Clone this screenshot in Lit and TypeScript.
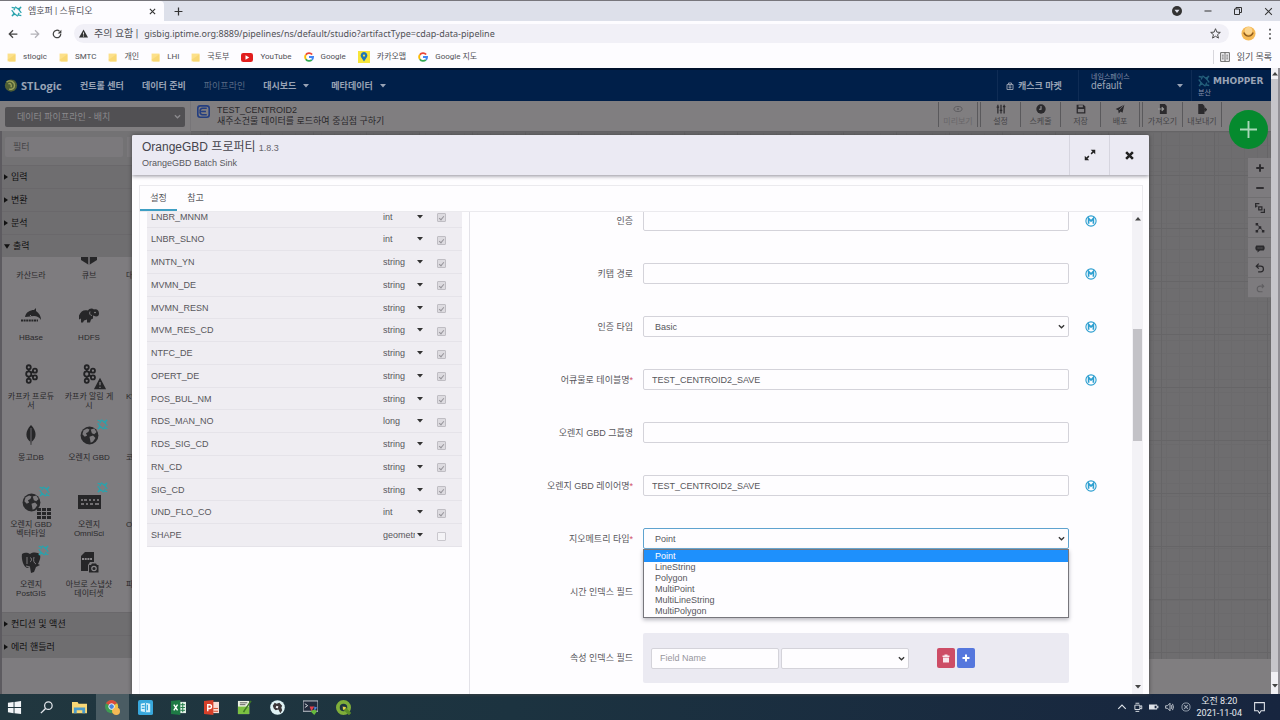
import { LitElement, html, svg, css, nothing } from "lit";
import { customElement } from "lit/decorators.js";
import { classMap } from "lit/directives/class-map.js";

const sans = css`"Liberation Sans", "Noto Sans CJK KR", sans-serif`;
const uiFont = css`Roboto, "Noto Sans CJK KR", sans-serif`;

/* ---------- icon drawings ---------- */
const icon = (w: number, h: number, body: unknown, box = "0 0 16 16") =>
  html`<svg width=${w} height=${h} viewBox=${box} fill="none" aria-hidden="true">${body}</svg>`;

const swirl = (size: number, color = "#29a3ad") =>
  icon(size, size, svg`<g stroke=${color} stroke-width="1.7">
    <path d="M1 2l5 1M6 1l4 3 5-2M14 1l-2 5 3 4M15 14l-5-1M10 15l-4-3-5 2M2 15l2-5-3-4M4 6l2-3M10 4l2 2M12 10l-2 3M6 12l-2-2"/></g>`);

const chevron = (color = "#333") =>
  icon(7, 7, svg`<path d="M2 5l6 6 6-6" stroke=${color} stroke-width="3"/>`);

const caret = (color = "#333") =>
  icon(6, 4, svg`<path d="M0 0h12l-6 7z" fill=${color}/>`, "0 0 12 8");

const arrow = (up: boolean) => icon(6, 4, svg`<path d=${up ? "M0 7h12L6 0z" : "M0 0h12L6 7z"} fill="#444"/>`, "0 0 12 8");

const googleG = icon(10, 10, svg`<g stroke-width="3">
  <path d="M13 4A6.3 6.3 0 0 0 3 4.500" stroke="#ea4335"/>
  <path d="M3 4.500a6.300 6.300 0 0 0 0 7" stroke="#fbbc05"/>
  <path d="M3 11.500a6.300 6.300 0 0 0 9.500 1" stroke="#34a853"/>
  <path d="M12.500 12.500a6 6 0 0 0 2-4.500H8" stroke="#4285f4"/></g>`);

const folder = icon(9, 11, svg`<path d="M1 1h14v14H1z" fill="#fce08a"/><path d="M1 12l3 3h11V2z" fill="#f8d774"/>`);

const globe = (s: number) => icon(s, s, svg`<circle cx="8" cy="8" r="7.500" fill="#29292b"/>
  <path d="M3 3.500l3-1.500 2 1-1 2-2 1 1 2-2 1-2-2zM9 3l3-1 2 3-2 2-2-1zM8 9l3-1 2 2-2 3-2 1z" fill="#7c7a7d"/>`);

const kafka = svg`<g stroke="#222224" stroke-width="1.600"><circle cx="6" cy="3" r="1.800"/><circle cx="6" cy="9" r="2.300"/>
  <circle cx="6" cy="15" r="1.800"/><circle cx="11.500" cy="6" r="1.800"/><circle cx="11.500" cy="12" r="1.800"/>
  <path d="M6 4.800v1.900M6 11.300v1.900M8 7.800l2-.9M8 10.200l2 .9"/></g>`;

const dark = "#262628";
const drawings: Record<string, unknown> = {
  cass: icon(0, 0, nothing),
  cube: icon(20, 24, svg`<path d="M2 2h16v17l-8 5-8-5z" fill=${dark}/><path d="M10 8v16" stroke="#7c7a7d" stroke-width="1.500"/>`, "0 0 20 24"),
  hbase: icon(22, 16, svg`<path d="M5 10c1-5 5-7 9-7l2-2v3c3 2 5 5 5 9-2-3-4-4-7-4-3 0-5 1-9 1z" fill=${dark}/>
    <path d="M10 8c2 3 5 3 7 5" stroke="#7c7a7d"/><path d="M1 13.500h17" stroke=${dark} stroke-width="2" stroke-dasharray="2 .6"/>`, "0 0 22 16"),
  hdfs: icon(22, 17, svg`<path d="M1 8c2-5 5-6 9-5 1-2 4-3 6-1 3-1 5 1 5 4 0 2-1 3-3 3l-3-1v3l-2 1-1 3h-3v-3l-3 1-1 2H3v-4l-2 1z" fill=${dark}/>
    <path d="M12 4c-1 2 0 4 2 4" stroke="#7c7a7d"/><circle cx="17" cy="5" r=".8" fill="#999"/>`, "0 0 22 16"),
  kafka: icon(18, 22, kafka, "0 0 16 18"),
  kafkaWarn: html`<span class="stack">${icon(18, 22, kafka, "0 0 16 18")}<span class="badge warn">${icon(14, 13,
    svg`<path d="M8 1l7.500 14H.5z" fill=${dark}/><path d="M8 6v4M8 12v1.600" stroke="#7c7a7d" stroke-width="1.600"/>`)}</span></span>`,
  leaf: icon(12, 20, svg`<path d="M6 0c6 6 6 13 .5 17l-.2 3h-.6l-.2-3C0 13 0 6 6 0z" fill=${dark}/><path d="M6 3v14" stroke="#7c7a7d" stroke-width=".8"/>`, "0 0 12 20"),
  gbd: html`<span class="stack">${globe(19)}<span class="badge top">${swirl(11)}</span></span>`,
  tile: html`<span class="stack">${globe(19)}<span class="badge top">${swirl(11)}</span><span class="badge low">${icon(14, 11,
    svg`<path d="M0 0h4v3H0zM5 0h4v3H5zM10 0h4v3h-4zM0 4h4v3H0zM5 4h4v3H5zM10 4h4v3h-4zM0 8h4v3H0zM5 8h4v3H5zM10 8h4v3h-4z" fill=${dark}/>`, "0 0 14 11")}</span></span>`,
  omni: html`<span class="stack">${icon(23, 14, svg`<path d="M0 0h23v14H0z" fill=${dark}/>
    <path d="M3 5h2M6 5h3M11 5h2M15 5h2M19 5h2M3 9h3M8 9h2M12 9h3M17 9h4" stroke="#8a888b" stroke-width="1.500"/>`, "0 0 23 14")}<span class="badge omni">${swirl(11)}</span></span>`,
  post: html`<span class="stack">${icon(20, 21, svg`<path d="M1 2c3-2 6-1 8 0 3-2 8-2 10 1 1 3-1 7-2 9l2 1-4 2-2 5-3 1-1-6-3 1C3 15 0 8 1 2z" fill=${dark}/>
    <path d="M6 5v7M9 6c2-1 2 3 0 4M13 5c-1 4 0 6 2 7M5 14l4 1" stroke="#7c7a7d"/>`, "0 0 20 21")}<span class="badge top">${swirl(11)}</span></span>`,
  avro: icon(20, 23, svg`<path d="M6 1h9v10h-4l-2 3v6H2V5z" fill=${dark}/><path d="M3 8h10" stroke="#8a888b" stroke-width="2" stroke-dasharray="2 .7"/>
    <path d="M10 14h2l1-1.500h4L18 14h1.500v7.500H10z" fill=${dark}/><circle cx="15" cy="17.500" r="2.200" stroke="#8a888b" stroke-width="1.200"/>`, "0 0 20 23"),
};

const expand = icon(12, 12, svg`<path d="M9.500 6.500L13 3M6.500 9.500L3 13" stroke="#222" stroke-width="2"/>
  <path d="M9 1h6v6zM1 9v6h6z" fill="#222"/>`);
const cross = icon(9, 9, svg`<path d="M2 2l12 12M14 2L2 14" stroke="#222" stroke-width="4.500"/>`);
const macroIcon = icon(12, 12, svg`<circle cx="8" cy="8" r="6.800" stroke="#2d9fd0" stroke-width="1.500"/>
  <path d="M4.800 11.500v-7L8 8l3.200-3.500v7" stroke="#2d9fd0" stroke-width="2.200"/>`);

/* ---------- browser chrome ---------- */
@customElement("browser-chrome")
class BrowserChrome extends LitElement {
  static styles = css`
    :host { display: block; font: 10px/14px ${uiFont}; color: #505056; flex: none; }
    button, a { font: inherit; color: inherit; border: 0; padding: 0; background: none; text-decoration: none; }
    button { display: grid; place-items: center; }
    svg { display: block; flex: none; }
    .strip { display: flex; align-items: center; height: 21px; background: #dde0ea; border-top: 1px solid #77767c; box-sizing: border-box; }
    .tab { display: flex; align-items: center; align-self: stretch; width: 164px; box-sizing: border-box; padding: 0 8px 0 11px; gap: 6px; background: #fdfcff; border-radius: 0 4px 0 0; }
    .name { flex: 1; font-size: 9px; }
    .plus { margin: 0 auto 0 10px; }
    .win { display: flex; gap: 22px; padding-right: 7px; align-items: center; }
    .bar { display: flex; align-items: center; height: 25px; padding: 0 8px; gap: 12px; background: #fdfcff; }
    .omni { flex: 1; display: flex; align-items: center; gap: 6px; height: 19px; border-radius: 10px; background: #f1f0f7; padding: 0 8px 0 5px; }
    .url { flex: 1; border: 0; background: none; font: 9px/14px "Noto Sans", sans-serif; color: #505056; padding: 0; outline: 0; min-width: 0; }
    .marks { display: flex; align-items: center; height: 22px; padding: 0 8px 0 7px; background: #fdfcff; font-size: 8px; }
    .mark { display: flex; align-items: center; gap: 7px; margin-right: 12px; white-space: nowrap; }
    .list { display: flex; align-items: center; gap: 7px; margin-left: auto; border-left: 1px solid #d8d7dd; padding-left: 6px; font-size: 9px; }
  `;
  render() {
    const marks: [unknown, string][] = [
      [folder, "stlogic"], [folder, "SMTC"], [folder, "개인"], [folder, "LHI"], [folder, "국토부"],
      [icon(12, 9, svg`<rect width="16" height="12" rx="3" fill="#e11d1d"/><path d="M6 3l5 3-5 3z" fill="#fff"/>`, "0 0 16 12"), "YouTube"],
      [googleG, "Google"],
      [icon(12, 12, svg`<path d="M0 0h16v16H0z" fill="#f7e53a"/><path d="M8 14L4 8a4.500 4.500 0 1 1 8 0z" fill="#1d76b8"/><circle cx="8" cy="6" r="1.500" fill="#f7e53a"/>`), "카카오맵"],
      [googleG, "Google 지도"],
    ];
    return html`
      <div class="strip">
        <div class="tab">${swirl(11)}<span class="name">엠호퍼 | 스튜디오</span>
          <button aria-label="탭 닫기">${icon(7, 7, svg`<path d="M2 2l12 12M14 2L2 14" stroke="#333" stroke-width="2.500"/>`)}</button></div>
        <button class="plus" aria-label="새 탭">${icon(9, 9, svg`<path d="M8 1v14M1 8h14" stroke="#333" stroke-width="2.200"/>`)}</button>
        <div class="win">
          <button aria-label="검색">${icon(10, 10, svg`<circle cx="8" cy="8" r="8" fill="#333"/><path d="M4 6h8l-4 5z" fill="#dde0ea"/>`)}</button>
          <button aria-label="최소화">${icon(8, 8, svg`<path d="M1 8h14" stroke="#333" stroke-width="2"/>`)}</button>
          <button aria-label="이전 크기로">${icon(8, 8, svg`<path d="M1 4h10v11H1zM4 4V1h11v10h-4" stroke="#333" stroke-width="2"/>`)}</button>
          <button aria-label="닫기">${icon(9, 9, svg`<path d="M2 2l12 12M14 2L2 14" stroke="#333" stroke-width="1.800"/>`)}</button>
        </div>
      </div>
      <div class="bar">
        <button aria-label="뒤로">${icon(10, 10, svg`<path d="M15 8H2M8 2L2 8l6 6" stroke="#444" stroke-width="2"/>`)}</button>
        <button aria-label="앞으로">${icon(10, 10, svg`<path d="M1 8h13M8 2l6 6-6 6" stroke="#b4b3b9" stroke-width="2"/>`)}</button>
        <button aria-label="새로고침">${icon(10, 10, svg`<path d="M14 8a6 6 0 1 1-2-4.500" stroke="#444" stroke-width="2"/><path d="M15 1v6H9z" fill="#444"/>`)}</button>
        <div class="omni">
          ${icon(9, 9, svg`<path d="M8 1l8 14H0z" fill="#333"/><path d="M8 6v4M8 11.500v2" stroke="#fff" stroke-width="1.500"/>`)}
          <span>주의 요함 |</span>
          <input class="url" aria-label="주소" value="gisbig.iptime.org:8889/pipelines/ns/default/studio?artifactType=cdap-data-pipeline" />
          <button aria-label="북마크">${icon(11, 11, svg`<path d="M8 1l2 5 5 .4-4 3.300 1.300 5L8 12l-4.300 2.700L5 9.700 1 6.400 6 6z" stroke="#444" stroke-width="1.400"/>`)}</button>
        </div>
        <button aria-label="프로필">${icon(15, 15, svg`<circle cx="8" cy="8" r="7.500" fill="#f5b955"/><circle cx="8" cy="5" r="4" fill="#fbd48d"/><path d="M3 7c2 5 8 5 10 0" stroke="#8a5a20" stroke-width="1.500"/>`)}</button>
        <button aria-label="메뉴">${icon(4, 12, svg`<path d="M2 1v2M2 6v2M2 11v2" stroke="#444" stroke-width="2"/>`, "0 0 4 14")}</button>
      </div>
      <nav class="marks">
        ${marks.map(([i, t]) => html`<a class="mark" href="#">${i}<span>${t}</span></a>`)}
        <button class="list">${icon(10, 10, svg`<path d="M1 1h14v14H1zM8 1v14M3 5h3M3 8h3M3 11h3M10 5h3M10 8h3M10 11h3" stroke="#555" stroke-width="1.400"/>`)}<span>읽기 목록</span></button>
      </nav>`;
  }
}

/* ---------- application header and toolbar ---------- */
@customElement("app-header")
class AppHeader extends LitElement {
  static styles = css`
    :host { display: block; flex: none; font: 9px/12px ${sans}; color: #99a3b5; }
    button, a { font: inherit; color: inherit; border: 0; padding: 0; background: none; text-decoration: none; }
    svg { display: block; flex: none; }
    .top { display: flex; align-items: stretch; height: 33px; box-sizing: border-box; background: #001f49; border-top: 2px solid #00112d; padding-left: 4px; }
    .brand { display: flex; align-items: center; gap: 3px; width: 76px; font: bold 11px/16px "Open Sans", sans-serif; }
    .nav { display: flex; align-items: center; gap: 18px; font-weight: bold; }
    .drop { display: flex; align-items: center; gap: 7px; margin-right: 4px; }
    .here { color: #596b86; font-weight: normal; }
    .right { display: flex; margin-left: auto; }
    .market { display: flex; align-items: center; gap: 4px; width: 81px; box-sizing: border-box; padding-left: 8px; border-left: 1px solid #0f2c55; font-weight: bold; }
    .space { display: flex; align-items: center; justify-content: space-between; width: 113px; box-sizing: border-box; padding: 0 8px 0 12px; border-left: 1px solid #0f2c55; text-align: left; }
    .space > span { padding-bottom: 8px; }
    .small { display: block; font-size: 7px; line-height: 9px; color: #8691aa; }
    .ns { display: block; font: 10px/10px Roboto, sans-serif; }
    .hopper { width: 80px; box-sizing: border-box; border-left: 1px solid #0f2c55; padding: 4px 0 0 6px; }
    .logo { display: flex; align-items: center; gap: 3px; font: bold 9px/14px "DejaVu Sans", sans-serif; }
    .tools { display: flex; align-items: stretch; height: 30px; background: #807e80; color: #39383b; }
    .kind { width: 191px; box-sizing: border-box; border-right: 1px solid #777578; padding: 5px 5px 4px; display: flex; align-items: center; position: relative; }
    .kind select { appearance: none; flex: 1; height: 20px; border: 0; border-radius: 2px; background: #515053; color: #8b8a8d; font: inherit; padding: 0 12px; }
    .kind svg { position: absolute; right: 9px; }
    .title { display: flex; gap: 7px; padding: 4px 0 0 6px; line-height: 11px; flex: 1; color: #29282b; }
    .title p { margin: 0; }
    .acts { display: flex; padding: 1px 49px 4px 0; }
    .act { width: 40px; display: flex; flex-direction: column; align-items: center; gap: 3px; padding: 2px 0 0; border-left: 1px solid #5a595c; font-size: 8px; line-height: 10px; color: #454447; white-space: nowrap; }
    .act:last-child { border-right: 1px solid #5a595c; }
    .act.gap { border-right: 1px solid #5a595c; margin-right: 2px; }
    .act.off { color: #686669; }
  `;
  render() {
    const d = "#2b2a2d";
    const acts: [string, unknown, string][] = [
      ["미리보기", svg`<ellipse cx="8" cy="8" rx="6.500" ry="4" stroke="#5d5c5f" stroke-width="1.500"/><circle cx="8" cy="8" r="1.500" fill="#5d5c5f"/>`, "off gap"],
      ["설정", svg`<path d="M3 1v14M8 1v14M13 1v14M1 5h4M6 10h4M11 4h4" stroke=${d} stroke-width="2"/>`, ""],
      ["스케줄", svg`<circle cx="8" cy="8" r="7.500" fill=${d}/><path d="M8 3v5.500H5" stroke="#999" stroke-width="1.700"/>`, ""],
      ["저장", svg`<path d="M1 1h11l3 3v11H1z" fill=${d}/><path d="M4 2h7v3H4zM3 8h10v5H3z" fill="#807e80"/>`, ""],
      ["배포", svg`<path d="M15 1L1 8l4 2 1 5 3-3 3 2z" fill=${d}/><path d="M14 2l-8 8" stroke="#807e80"/>`, "gap"],
      ["가져오기", svg`<path d="M3 0h8l3 3v13H3z" fill=${d}/><path d="M0 8h8M6 5l3 3-3 3" stroke="#999" stroke-width="1.700"/>`, ""],
      ["내보내기", svg`<path d="M2 0h7l3 3v13H2z" fill=${d}/><path d="M6 9h8M12 6l3 3-3 3" stroke=${d} stroke-width="2"/>`, ""],
    ];
    return html`
      <header class="top">
        <a class="brand" href="#">${icon(14, 15, svg`<circle cx="8" cy="8" r="7" fill="#4f5f35"/><path d="M3 4c4-3 9 0 9 4s-4 5-6 4M5 6c3-1 4 2 3 4" stroke="#9aa05a" stroke-width="1.600"/>`)}<span>STLogic</span></a>
        <nav class="nav">
          <a href="#">컨트롤 센터</a><a href="#">데이터 준비</a><a class="here" href="#">파이프라인</a>
          <button class="drop">대시보드 ${caret("#99a3b5")}</button><button class="drop">메타데이터 ${caret("#99a3b5")}</button>
        </nav>
        <div class="right">
          <button class="market">${icon(8, 10, svg`<path d="M5 5V2h6v3M2 5h12v10H2z" stroke="#8f99aa" stroke-width="2"/><path d="M8 6v8M5 8h6M5 11h6" stroke="#8f99aa" stroke-width="1.500"/>`)}캐스크 마켓</button>
          <button class="space"><span><span class="small">네임스페이스</span><span class="ns">default</span></span>${caret("#99a3b5")}</button>
          <div class="hopper"><div class="logo">${swirl(12, "#24607c")}<span>MHOPPER</span></div><span class="small">분산</span></div>
        </div>
      </header>
      <div class="tools">
        <div class="kind"><select aria-label="파이프라인 종류"><option>데이터 파이프라인 - 배치</option></select>${chevron("#8b8a8d")}</div>
        <div class="title">${icon(13, 13, svg`<rect x="1" y="1" width="14" height="14" rx="3" stroke="#233e80" stroke-width="2"/><path d="M12 4H7a3 3 0 0 0-3 4 3 3 0 0 0 3 4h5M5 8h6" stroke="#233e80" stroke-width="2"/>`)}
          <div><p>TEST_CENTROID2</p><p>새주소건물 데이터를 로드하여 중심점 구하기</p></div></div>
        <div class="acts">${acts.map(([t, i, c]) => html`<button class="act ${c}">${icon(10, 10, i)}${t}</button>`)}</div>
      </div>`;
  }
}

/* ---------- plugin palette ---------- */
@customElement("plugin-palette")
class PluginPalette extends LitElement {
  static styles = css`
    :host { display: flex; flex-direction: column; width: 191px; flex: none; box-sizing: border-box; background: #7e7c7f; font: 9px/12px ${sans}; color: #2a292b; overflow: hidden; border-left: 2px solid #5d5b60; }
    svg { display: block; }
    .find { display: flex; gap: 4px; padding: 6px 3px 8px; background: #737274; }
    .find input { width: 118px; height: 20px; box-sizing: border-box; border: 0; border-radius: 2px; background: #7b797c; padding: 0 8px; font: inherit; color: #333; outline: 0; }
    .find input::placeholder { color: #444346; opacity: 1; }
    .find button { flex: 1; border: 0; background: #7b797c; }
    .group { display: flex; align-items: center; gap: 3px; width: 100%; height: 23px; flex: none; padding: 0 2px; border: 0; border-top: 1px solid #6a686b; background: #6f6e70; font: 9px/12px ${sans}; color: #111; text-align: left; }
    .shelf { height: 355px; overflow: hidden; }
    .grid { display: grid; grid-template-columns: repeat(3, 58px); grid-template-rows: 62px 59px 61px 67px 60px 67px; margin-top: -22px; }
    .cell { display: flex; flex-direction: column; align-items: center; border: 0; padding: 0 4px; background: none; font: 8px/9px ${sans}; color: #2a292b; text-align: center; }
    .pic { display: grid; place-items: center; height: 36px; flex: none; }
    .edge { align-items: flex-start; padding-left: 8px; }
    .stack { position: relative; display: block; }
    .badge { position: absolute; }
    .top { left: 17px; top: -7px; }
    .low { left: 15px; top: 15px; }
    .warn { left: 13px; top: 14px; }
    .omni { left: 19px; top: -13px; }
  `;
  render() {
    const cells: [string, string][] = [
      ["cass", "카산드라"], ["cube", "큐브"], ["", "대"],
      ["hbase", "HBase"], ["hdfs", "HDFS"], ["", ""],
      ["kafka", "카프카 프로듀서"], ["kafkaWarn", "카프카 알림 게시"], ["", "KV"],
      ["leaf", "몽고DB"], ["gbd", "오렌지 GBD"], ["", "코"],
      ["tile", "오렌지 GBD 벡터타일"], ["omni", "오렌지 OmniSci"], ["", "Or"],
      ["post", "오렌지 PostGIS"], ["avro", "아브로 스냅샷 데이터셋"], ["", "파"],
    ];
    const group = (t: string, open = false) => html`<button class="group">${open
      ? icon(6, 5, svg`<path d="M0 0h12l-6 9z" fill="#111"/>`, "0 0 12 9")
      : icon(4, 6, svg`<path d="M0 0l7 5-7 5z" fill="#111"/>`, "0 0 7 10")}${t}</button>`;
    return html`
      <div class="find"><input aria-label="필터" placeholder="필터" /><button aria-label="보기 방식"></button></div>
      ${["입력", "변환", "분석"].map((t) => group(t))}${group("출력", true)}
      <div class="shelf"><div class="grid">${cells.map(([k, t]) => html`
        <button class=${classMap({ cell: true, edge: !k })}><span class="pic">${k ? drawings[k] : nothing}</span>${t}</button>`)}</div></div>
      ${["컨디션 및 액션", "에러 핸들러"].map((t) => group(t))}`;
  }
}

/* ---------- canvas with zoom controls ---------- */
@customElement("pipeline-canvas")
class PipelineCanvas extends LitElement {
  static styles = css`
    :host { display: flex; flex-direction: column; flex: 1; background: #807e80; }
    svg { display: block; }
    .area { flex: 1; display: flex; flex-direction: column; align-items: flex-end; margin-bottom: 35px; box-sizing: border-box; padding-top: 26px; border-top: 1px solid #656466;
      background: repeating-linear-gradient(90deg, #666567 0 1px, transparent 1px 53px) 16px 0, repeating-linear-gradient(#666567 0 1px, transparent 1px 53px) 0 43px, repeating-linear-gradient(90deg, #6b6a6c 0 1px, transparent 1px 13px), repeating-linear-gradient(#6b6a6c 0 1px, transparent 1px 13px), #6e6d6f; }
    .ctl { display: flex; flex-direction: column; background: #7d7b7e; }
    .ctl button { display: grid; place-items: center; width: 23px; height: 20px; padding: 0; border: 0; border-bottom: 1px solid #706f71; background: none; }
    .add { position: absolute; right: 3px; top: 42px; width: 39px; height: 39px; border: 0; border-radius: 50%; background: #058a2e; display: grid; place-items: center; padding: 0; }
  `;
  render() {
    const c = "#2b2a2d";
    const ctl: [string, unknown][] = [
      ["확대", svg`<path d="M8 2v12M2 8h12" stroke=${c} stroke-width="3"/>`],
      ["축소", svg`<path d="M2 8h12" stroke=${c} stroke-width="3"/>`],
      ["맞춤", svg`<path d="M1 7V1h6M1 5h3M15 9v6H9" stroke=${c} stroke-width="2"/><path d="M6 6h5v5H6z" stroke=${c} stroke-width="2"/>`],
      ["정렬", svg`<path d="M1 0h4v4H1zM6 5h4v4H6zM1 11h4v4H1zM11 11h4v4h-4z" fill=${c}/><path d="M3 13l5-6 5 6M3 2l5 5" stroke=${c} stroke-width="1.200"/>`],
      ["댓글", svg`<path d="M2 4h12c2 2 2 6 0 8H8l-4 3v-3H2C0 10 0 6 2 4z" fill=${c}/><path d="M4 8h8" stroke="#888" stroke-dasharray="2 1"/>`],
      ["되돌리기", svg`<path d="M3 5h6a4 4 0 0 1 0 9H5M6 1L2 5l4 4" stroke=${c} stroke-width="2"/>`],
      ["다시 실행", svg`<path d="M13 5H8a4.500 4.500 0 0 0 0 9h4M11 2l3 3-3 3" stroke="#605f62" stroke-width="1.700"/>`],
    ];
    return html`<div class="area"><div class="ctl">${ctl.map(([t, i]) => html`<button aria-label=${t}>${icon(10, 10, i)}</button>`)}</div></div>
      <button class="add" aria-label="추가">${icon(17, 17, svg`<path d="M8 0v16M0 8h16" stroke="#a9d8b8" stroke-width="1.800"/>`)}</button>`;
  }
}

/* ---------- property dialog ---------- */
@customElement("property-dialog")
class PropertyDialog extends LitElement {
  static styles = css`
    :host { display: flex; flex-direction: column; background: #fefdff; font: 9px/12px ${sans}; color: #58575c; border-radius: 2px 2px 0 0; overflow: hidden; box-shadow: 0 0 4px #444; }
    svg { display: block; }
    button, input, select { font: inherit; color: inherit; }
    .head { display: flex; height: 40px; flex: none; background: #ebeaf3; box-shadow: 0 1px 4px #8d8c96; }
    .names { flex: 1; padding: 5px 0 0 10px; }
    .names h1 { margin: 0; font: 12px/15px ${sans}; color: #45444c; }
    .names small { font-size: 9px; color: #66656c; }
    .names p { margin: 1px 0 0; }
    .head button { width: 40px; border: 0; border-left: 1px solid #d6d5df; background: none; display: grid; place-items: center; padding: 0; }
    .body { display: flex; flex-direction: column; flex: 1; min-height: 0; margin: 10px 6px 0 7px; }
    .tabs { display: flex; height: 27px; flex: none; border: 1px solid #ebeaee; box-sizing: border-box; }
    .tabs button { width: 37px; border: 0; border-bottom: 2px solid transparent; background: none; padding: 0; }
    .tabs .on { border-color: #3f9fc4; }
    .panes { flex: 1; min-height: 0; display: flex; border-left: 1px solid #f1f0f4; overflow: hidden; }
    .schema { width: 330px; box-sizing: border-box; flex: none; padding: 0 7px; border-right: 1px solid #e3e2e8; }
    table { width: 100%; height: 341px; margin-top: -6px; border-collapse: collapse; background: #efedf2; }
    td { padding: 0; border-bottom: 1px solid #e5e3e9; vertical-align: middle; }
    .field { padding-left: 4px; }
    .type { width: 47px; }
    .tick { width: 32px; }
    .pick { display: flex; align-items: center; gap: 2px; }
    .pick select { appearance: none; width: 32px; border: 0; padding: 0; background: none; height: 14px; }
    .tick input { appearance: none; display: grid; place-items: center; box-sizing: border-box; width: 9px; height: 9px; margin: 2px 0 0 7px; border: 1px solid #c9c7cd; border-radius: 1px; background: #f4f3f6; }
    .tick input:checked { background: #dddbe0; border-color: #bfbdc3; }
    .tick input:checked::before { content: ""; box-sizing: border-box; width: 3px; height: 5px; border: solid #97959b; border-width: 0 1px 1px 0; transform: rotate(40deg); }
    .form { flex: 1; margin-top: -18px; }
    .row { display: grid; grid-template-columns: 173px minmax(0, 1fr) 63px; align-items: center; height: 53px; }
    .row > label { text-align: right; padding-right: 10px; }
    .req { color: #d0506a; }
    .ctrl { position: relative; display: flex; align-items: center; }
    .ctrl > svg, .half svg { position: absolute; right: 4px; }
    .box { appearance: none; width: 100%; height: 21px; box-sizing: border-box; border: 1px solid #d4d3da; border-radius: 2px; background: #fefdff; padding: 0 8px; outline: 0; }
    select.box { padding: 0 11px; }
    .open { border-color: #5fa3cf; }
    .macro { border: 0; background: none; padding: 0; margin-left: 16px; width: 12px; }
    .menu { position: absolute; z-index: 2; left: 0; right: 0; top: 21px; margin: 0; padding: 0; list-style: none; border: 1px solid #77767c; background: #fefdff; box-shadow: 0 2px 4px #b9b8bf; line-height: 11px; }
    .menu li { padding: 0 11px; }
    .menu .sel { background: #1e90fc; color: #fff; line-height: 12px; }
    .last { height: 80px; }
    .last .ctrl { display: block; }
    .pair { display: flex; flex: 1; align-items: center; gap: 2px; height: 50px; box-sizing: border-box; padding: 0 8px; background: #ebeaf2; border-radius: 2px; }
    .half { position: relative; display: flex; align-items: center; width: 128px; }
    .box::placeholder { color: #97969d; opacity: 1; }
    .sq { width: 18px; height: 20px; border: 0; border-radius: 2px; padding: 0; display: grid; place-items: center; background: #5577dd; }
    .del { background: #cd4d66; margin-left: 26px; }
    .scroll { width: 11px; flex: none; background: #f3f2f6; display: flex; flex-direction: column; align-items: center; padding: 5px 0; box-sizing: border-box; justify-content: space-between; }
    .rail { flex: 1; align-self: stretch; display: flex; flex-direction: column; }
    .thumb { background: #c3c2c7; margin: 0 1px; }
  `;
  render() {
    const fields = [["LNBR_MNNM", "int"], ["LNBR_SLNO", "int"], ["MNTN_YN", "string"], ["MVMN_DE", "string"], ["MVMN_RESN", "string"],
      ["MVM_RES_CD", "string"], ["NTFC_DE", "string"], ["OPERT_DE", "string"], ["POS_BUL_NM", "string"], ["RDS_MAN_NO", "long"],
      ["RDS_SIG_CD", "string"], ["RN_CD", "string"], ["SIG_CD", "string"], ["UND_FLO_CO", "int"], ["SHAPE", "geometry"]];
    const macro = html`<button class="macro" aria-label="매크로">${macroIcon}</button>`;
    const row = (id: string, label: string, control: unknown, req = false, m = true, cls = "") => html`
      <div class="row ${cls}"><label for=${id}>${label}${req ? html`<span class="req">*</span>` : nothing}</label>
        <div class="ctrl">${control}</div>${m ? macro : nothing}</div>`;
    const text = (id: string, v = "") => html`<input class="box" id=${id} .value=${v} />`;
    const shapes = ["Point", "LineString", "Polygon", "MultiPoint", "MultiLineString", "MultiPolygon"];
    return html`
      <div class="head">
        <div class="names"><h1>OrangeGBD 프로퍼티 <small>1.8.3</small></h1><p>OrangeGBD Batch Sink</p></div>
        <button aria-label="확장">${expand}</button><button aria-label="닫기">${cross}</button>
      </div>
      <div class="body">
        <div class="tabs"><button class="on">설정</button><button>참고</button></div>
        <div class="panes">
          <div class="schema"><table><tbody>${fields.map(([n, t]) => html`<tr>
            <td class="field">${n}</td>
            <td class="type"><span class="pick"><select aria-label="${n} 타입"><option>${t}</option></select>${caret()}</span></td>
            <td class="tick"><input type="checkbox" disabled aria-label="${n} 널 허용" ?checked=${n !== "SHAPE"} /></td></tr>`)}</tbody></table></div>
          <div class="form">
            ${row("auth", "인증", text("auth"))}
            ${row("keytab", "키탭 경로", text("keytab"))}
            ${row("kind", "인증 타입", html`<select class="box" id="kind"><option>Basic</option></select>${chevron()}`)}
            ${row("table", "어큐물로 테이블명", text("table", "TEST_CENTROID2_SAVE"), true)}
            ${row("group", "오렌지 GBD 그룹명", text("group"), false, false)}
            ${row("layer", "오렌지 GBD 레이어명", text("layer", "TEST_CENTROID2_SAVE"), true)}
            ${row("geom", "지오메트리 타입", html`<select class="box open" id="geom">${shapes.map((s) => html`<option>${s}</option>`)}</select>${chevron()}
              <ul class="menu">${shapes.map((s, i) => html`<li class=${i ? "" : "sel"}>${s}</li>`)}</ul>`, true, false)}
            ${row("time", "시간 인덱스 필드", text("time"), false, false)}
            ${row("attr", "속성 인덱스 필드", html`<div class="pair">
                <div class="half"><input class="box" id="attr" placeholder="Field Name" /></div>
                <div class="half"><select class="box" aria-label="필드 타입"><option></option></select>${chevron()}</div>
                <button class="sq del" aria-label="삭제">${icon(8, 9, svg`<path d="M1 2h4V0h6v2h4v3H1zM2 6h12v10H2z" fill="#f8e8ee"/>`)}</button>
                <button class="sq" aria-label="추가">${icon(8, 8, svg`<path d="M8 1v14M1 8h14" stroke="#fff" stroke-width="4"/>`)}</button>
              </div>`, false, false, "last")}
          </div>
          <div class="scroll">${arrow(true)}
            <div class="rail"><span style="flex:107"></span><span class="thumb" style="flex:112"></span><span style="flex:242"></span></div>
            ${arrow(false)}</div>
        </div>
      </div>`;
  }
}

/* ---------- desktop taskbar ---------- */
@customElement("task-bar")
class TaskBar extends LitElement {
  static styles = css`
    :host { display: flex; flex: none; height: 26px; background: linear-gradient(90deg, #21373f, #1c3340 40%, #17253f); font: 9px/12px ${uiFont}; color: #e6e9ee; }
    svg { display: block; }
    button { border: 0; background: none; padding: 0; display: grid; place-items: center; color: inherit; font: inherit; }
    .app { width: 33px; }
    .app:first-child { width: 30px; padding-right: 2px; }
    .on { background: #4a5c63; }
    .tray { display: flex; align-items: center; gap: 6px; margin-left: auto; padding-right: 14px; }
    .clock { margin-right: 5px; text-align: center; }
  `;
  render() {
    const apps: [string, unknown][] = [
      ["시작", svg`<path d="M1 3l6-1v5.500H1zM8 2l7-1v6.500H8zM1 8.500h6V14l-6-1zM8 8.500h7V15l-7-1z" fill="#f2f5f7"/>`],
      ["검색", svg`<circle cx="10" cy="6" r="4" stroke="#e6e9ee" stroke-width="1.300"/><path d="M7 9l-5 5" stroke="#e6e9ee" stroke-width="1.500"/>`],
      ["탐색기", svg`<path d="M0 2h6l1 2h9v10H0z" fill="#f8d775"/><path d="M2 8h12v6h-3v-3H5v3H2z" fill="#4b9ccc"/>`],
      ["Chrome", svg`<circle cx="7" cy="7" r="7" fill="#3e9b52"/><path d="M7 7L1 3.500A7 7 0 0 1 13 3.500z" fill="#d94b3c"/><path d="M7 7l6-3.500A7 7 0 0 1 8 14z" fill="#f0c443"/><circle cx="7" cy="7" r="3" fill="#4a86dd" stroke="#fff"/><circle cx="12" cy="12" r="4" fill="#f5b955"/>`],
      ["문서", svg`<rect width="16" height="16" rx="2" fill="#38a8dc"/><path d="M3 4l5-1 5 1v9H8l-5-1z" fill="#d8f2fb"/><path d="M8 3v10M4 6h3M4 9h3M10 5v6" stroke="#38a8dc" stroke-width="1.300"/>`],
      ["Excel", svg`<path d="M9 2h7v12H9z" fill="#e3f0e6"/><path d="M10 5h5M10 8h5M10 11h5M12.500 3v10" stroke="#1e7a45"/><path d="M0 1l10-1v16L0 15z" fill="#1e7a45"/><path d="M3 5l4 6M7 5l-4 6" stroke="#fff" stroke-width="1.500"/>`],
      ["PowerPoint", svg`<path d="M9 2h7v12H9z" fill="#f8dcd5"/><path d="M10 9h5M10 12h5" stroke="#d24726"/><path d="M0 1l10-1v16L0 15z" fill="#d6402a"/><path d="M4 12V5h2a2 2 0 0 1 0 4H4" stroke="#fff" stroke-width="1.500"/>`],
      ["편집기", svg`<path d="M1 1h12v14H1z" fill="#eef3e4"/><path d="M1 7h12v8H1z" fill="#7cc142"/><path d="M3 3h8M3 5h6" stroke="#555"/><path d="M15 1L8 11l-1 2" stroke="#3f7a25" stroke-width="1.600"/>`],
      ["DBeaver", svg`<circle cx="8" cy="8" r="7.800" fill="#dff3f5"/><path d="M3 6l2-3 2 1 3-1 3 3-1 2 1 3-2 3-2-4-3 1-2-2z" fill="#3b3638"/><path d="M7 6l2 1-1 2-2-1z" fill="#fff"/>`],
      ["터미널", svg`<path d="M0 1h16v11H0z" fill="#222b3d" stroke="#cfd3da"/><path d="M2 4l3 2-3 2" stroke="#d8dbe0"/><path d="M7 7h5l-3 5z" fill="#e5424d"/><path d="M12 7l3 1-3 4z" fill="#4c86e0"/><path d="M8 12l4-2 3 2-3 4z" fill="#67b93d"/>`],
      ["QGIS", svg`<circle cx="8" cy="8" r="6" stroke="#7fae3a" stroke-width="4"/><path d="M8 8l7 7" stroke="#5c8f28" stroke-width="3.500"/><path d="M7 7l4 1-3 3z" fill="#f0d24b"/>`],
    ];
    const w = "#dfe3e9";
    const tray = [svg`<path d="M2 11l6-6 6 6" stroke=${w} stroke-width="1.800"/>`,
      svg`<path d="M3 5h8v7H3zM11 7l3-1v5l-3-1M4 2h6M4 15h6" stroke=${w} stroke-width="1.500"/>`,
      svg`<path d="M0 4h13v8H0z" fill=${w}/><path d="M14 6v4M9 5v6" stroke=${w} stroke-width="2"/><path d="M9 6h3v4H9z" fill="#17253f"/>`,
      svg`<path d="M1 6h3l4-4v12l-4-4H1zM10 5q2 3 0 6M12 3q3 5 0 10" stroke=${w} stroke-width="1.300"/>`,
      svg`<circle cx="8" cy="8" r="6.500" stroke="#9aa4b2" stroke-width="1.500"/><path d="M5 5l6 6M11 5l-6 6" stroke="#9aa4b2" stroke-width="1.800"/>`];
    return html`
      ${apps.map(([t, i]) => html`<button class=${classMap({ app: true, on: t === "Chrome" })} aria-label=${t}>${icon(15, 15, i)}</button>`)}
      <div class="tray">${tray.map((t) => icon(10, 10, t))}
        <div class="clock">오전 8:20<br />2021-11-04</div>
        <button aria-label="알림">${icon(13, 13, svg`<path d="M2 2h12v10h-4l-2 3-2-3H2z" stroke=${w} stroke-width="1.300"/>`)}</button></div>`;
  }
}

@customElement("app-root")
class AppRoot extends LitElement {
  static styles = css`
    :host { display: flex; flex-direction: column; height: 100vh; overflow: hidden; }
    .page { flex: 1; min-height: 0; display: flex; }
    .view { position: relative; flex: 1; min-width: 0; display: flex; flex-direction: column; }
    .work { flex: 1; min-height: 0; display: flex; }
    property-dialog { position: absolute; left: 132px; right: 122px; top: 67px; bottom: 0; }
    .bar { width: 9px; flex: none; box-sizing: border-box; display: flex; flex-direction: column; align-items: center; background: #f1f0f4; border-right: 2px solid #929096; padding: 4px 0 6px; }
    .thumb { flex: 1; width: 100%; margin: 3px 0 12px; background: #c6c5ca; }
    .pointer { position: absolute; left: 697px; top: 490px; }
    svg { display: block; }
  `;
  render() {
    return html`
      <browser-chrome></browser-chrome>
      <div class="page">
        <main class="view">
          <app-header></app-header>
          <div class="work"><plugin-palette></plugin-palette><pipeline-canvas></pipeline-canvas></div>
          <property-dialog></property-dialog>
          <span class="pointer">${icon(9, 13, svg`<path d="M1 1v9l2-2 2 4 1.500-.7L5 8h3z" fill="#fff" stroke="#333"/>`, "0 0 9 13")}</span>
        </main>
        <div class="bar">${arrow(true)}<span class="thumb"></span>${arrow(false)}</div>
      </div>
      <task-bar></task-bar>`;
  }
}
